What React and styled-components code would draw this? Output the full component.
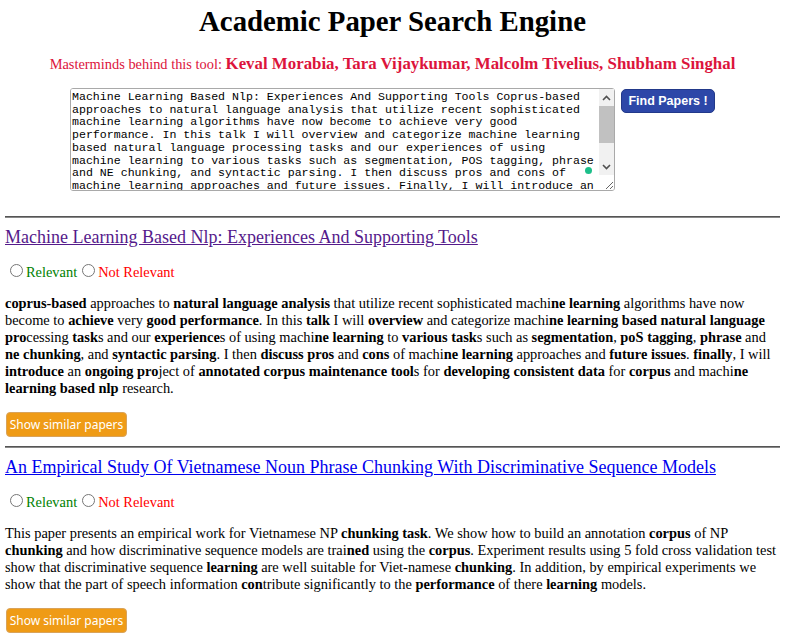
import React from 'react';
import styled, { createGlobalStyle } from 'styled-components';

const GlobalStyle = createGlobalStyle`
  body {
    margin: 0;
    background: #fff;
    font-family: "Liberation Serif", "Times New Roman", serif;
    font-size: 14.4px;
    color: #000;
  }
`;

const Page = styled.div`
  padding: 0 7px 0 5px;
`;

const Title = styled.h1`
  margin: 5px 0 0;
  text-align: center;
  font-size: 28.8px;
  font-weight: bold;
`;

const Credits = styled.div`
  margin-top: 16px;
  text-align: center;
  color: #dc143c;
  font-size: 14.4px;
  b {
    font-size: 16.85px;
  }
`;

const SearchForm = styled.form`
  margin-top: 14px;
  display: flex;
  justify-content: center;
  align-items: flex-start;
  gap: 6px;
`;

const AreaWrap = styled.div`
  position: relative;
`;

const QueryBox = styled.textarea`
  display: block;
  box-sizing: border-box;
  width: 545px;
  height: 103px;
  margin: 0;
  padding: 2px 15px 2px 1px;
  border: 1px solid #a9a9a9;
  border-radius: 3px;
  overflow-y: auto;
  font-family: "Liberation Mono", "Courier New", monospace;
  font-size: 11.6px;
  line-height: 12.7px;
  color: #000;
`;

/* the browser hides real scrollbars in the capture, so draw the classic one */
const Scrollbar = styled.div`
  position: absolute;
  top: 1px;
  right: 1px;
  width: 15px;
  height: 86px;
  display: flex;
  flex-direction: column;
  background: #f1f1f1;
`;

const ScrollButton = styled.div`
  height: 17px;
  display: flex;
  align-items: center;
  justify-content: center;
`;

const Thumb = styled.div`
  height: 37px;
  background: #c1c1c1;
`;

const Track = styled.div`
  flex: 1;
`;

const Dot = styled.span`
  position: absolute;
  left: 515px;
  top: 79px;
  width: 7px;
  height: 7px;
  border-radius: 50%;
  background: #1dbf8a;
`;

const FindButton = styled.button`
  margin-top: 1px;
  width: 94px;
  height: 24px;
  padding: 0;
  border: 1px solid #22398a;
  border-radius: 5px;
  background: #2d47a8;
  color: #fff;
  font-family: "Liberation Sans", Arial, sans-serif;
  font-weight: bold;
  font-size: 12.5px;
`;

const Divider = styled.hr`
  margin: 0;
  border: 0;
  border-top: 1px solid #555;
  border-bottom: 1px solid #888;
`;

const Results = styled.div`
  margin-top: 25px;
`;

const Result = styled.section`
  margin-bottom: 9px;
`;

const PaperLink = styled.a`
  display: block;
  margin-top: 9px;
  font-size: 18px;
  color: ${({ $visited }) => ($visited ? '#551a8b' : '#0000ee')};
  text-decoration: underline;
`;

const Feedback = styled.div`
  margin-top: 13px;
  input {
    margin: 3px 3px 0 5px;
    width: 13px;
    height: 13px;
    vertical-align: baseline;
  }
`;

const Choice = styled.span`
  color: ${({ $tone }) => $tone};
`;

const Abstract = styled.p`
  margin: 14px 0 15px;
  line-height: normal;
`;

const SimilarButton = styled.button`
  display: block;
  box-sizing: border-box;
  width: 121px;
  height: 25px;
  margin-left: 1px;
  padding: 0;
  border: 1px solid #d9a35a;
  border-radius: 4px;
  background: #ef9b16;
  color: #fff;
  font-family: "Noto Sans", "Open Sans", sans-serif;
  font-size: 12px;
`;

const Chevron = ({ up }) => (
  <svg width="9" height="6" viewBox="0 0 9 6">
    <path
      d={up ? 'M1 5 L4.5 1.5 L8 5' : 'M1 1 L4.5 4.5 L8 1'}
      fill="none"
      stroke="#505050"
      strokeWidth="1.6"
    />
  </svg>
);

const query =
  'Machine Learning Based Nlp: Experiences And Supporting Tools Coprus-based approaches to natural language analysis that utilize recent sophisticated machine learning algorithms have now become to achieve very good performance. In this talk I will overview and categorize machine learning based natural language processing tasks and our experiences of using machine learning to various tasks such as segmentation, POS tagging, phrase and NE chunking, and syntactic parsing. I then discuss pros and cons of machine learning approaches and future issues. Finally, I will introduce an ongoing project of annotated corpus maintenance tools for developing consistent data for corpus and machine learning based nlp research.';

const papers = [
  {
    title: 'Machine Learning Based Nlp: Experiences And Supporting Tools',
    visited: true,
    abstract: (
      <>
        <b>coprus-based</b> approaches to <b>natural language analysis</b> that utilize recent sophisticated machi<b>ne learning</b> algorithms have now become to <b>achieve</b> very <b>good performance</b>. In this <b>talk</b> I will <b>overview</b> and categorize machi<b>ne learning based natural language</b> <b>pro</b>cessing <b>task</b>s and our <b>experience</b>s of using machi<b>ne learning</b> to <b>various task</b>s such as <b>segmentation</b>, <b>poS tagging</b>, <b>phrase</b> and <b>ne chunking</b>, and <b>syntactic parsing</b>. I then <b>discuss pros</b> and <b>cons</b> of machi<b>ne learning</b> approaches and <b>future issues</b>. <b>finally</b>, I will <b>introduce</b> an <b>ongoing pro</b>ject of <b>annotated corpus maintenance tool</b>s for <b>developing consistent data</b> for <b>corpus</b> and machi<b>ne</b> <b>learning based nlp</b> research.
      </>
    ),
  },
  {
    title: 'An Empirical Study Of Vietnamese Noun Phrase Chunking With Discriminative Sequence Models',
    visited: false,
    abstract: (
      <>
        This paper presents an empirical work for Vietnamese NP <b>chunking task</b>. We show how to build an annotation <b>corpus</b> of NP <b>chunking</b> and how discriminative sequence models are trai<b>ned</b> using the <b>corpus</b>. Experiment results using 5 fold cross validation test show that discriminative sequence <b>learning</b> are well suitable for Viet-namese <b>chunking</b>. In addition, by empirical experiments we show that the part of speech information <b>con</b>tribute significantly to the <b>performance</b> of there <b>learning</b> models.
      </>
    ),
  },
];

export default function App() {
  return (
    <Page>
      <GlobalStyle />
      <Title>Academic Paper Search Engine</Title>
      <Credits>
        Masterminds behind this tool: <b>Keval Morabia, Tara Vijaykumar, Malcolm Tivelius, Shubham Singhal</b>
      </Credits>
      <SearchForm onSubmit={(e) => e.preventDefault()}>
        <AreaWrap>
          <QueryBox defaultValue={query} />
          <Scrollbar>
            <ScrollButton><Chevron up /></ScrollButton>
            <Track><Thumb /></Track>
            <ScrollButton><Chevron /></ScrollButton>
          </Scrollbar>
          <Dot />
        </AreaWrap>
        <FindButton type="submit">Find Papers !</FindButton>
      </SearchForm>
      <Results>
        {papers.map((p, i) => (
          <Result key={i}>
            <Divider />
            <PaperLink href="#" $visited={p.visited}>{p.title}</PaperLink>
            <Feedback>
              <input type="radio" name={`rel${i}`} />
              <Choice $tone="#008000">Relevant</Choice>
              <input type="radio" name={`rel${i}`} />
              <Choice $tone="#ff0000">Not Relevant</Choice>
            </Feedback>
            <Abstract>{p.abstract}</Abstract>
            <SimilarButton type="button">Show similar papers</SimilarButton>
          </Result>
        ))}
      </Results>
    </Page>
  );
}
